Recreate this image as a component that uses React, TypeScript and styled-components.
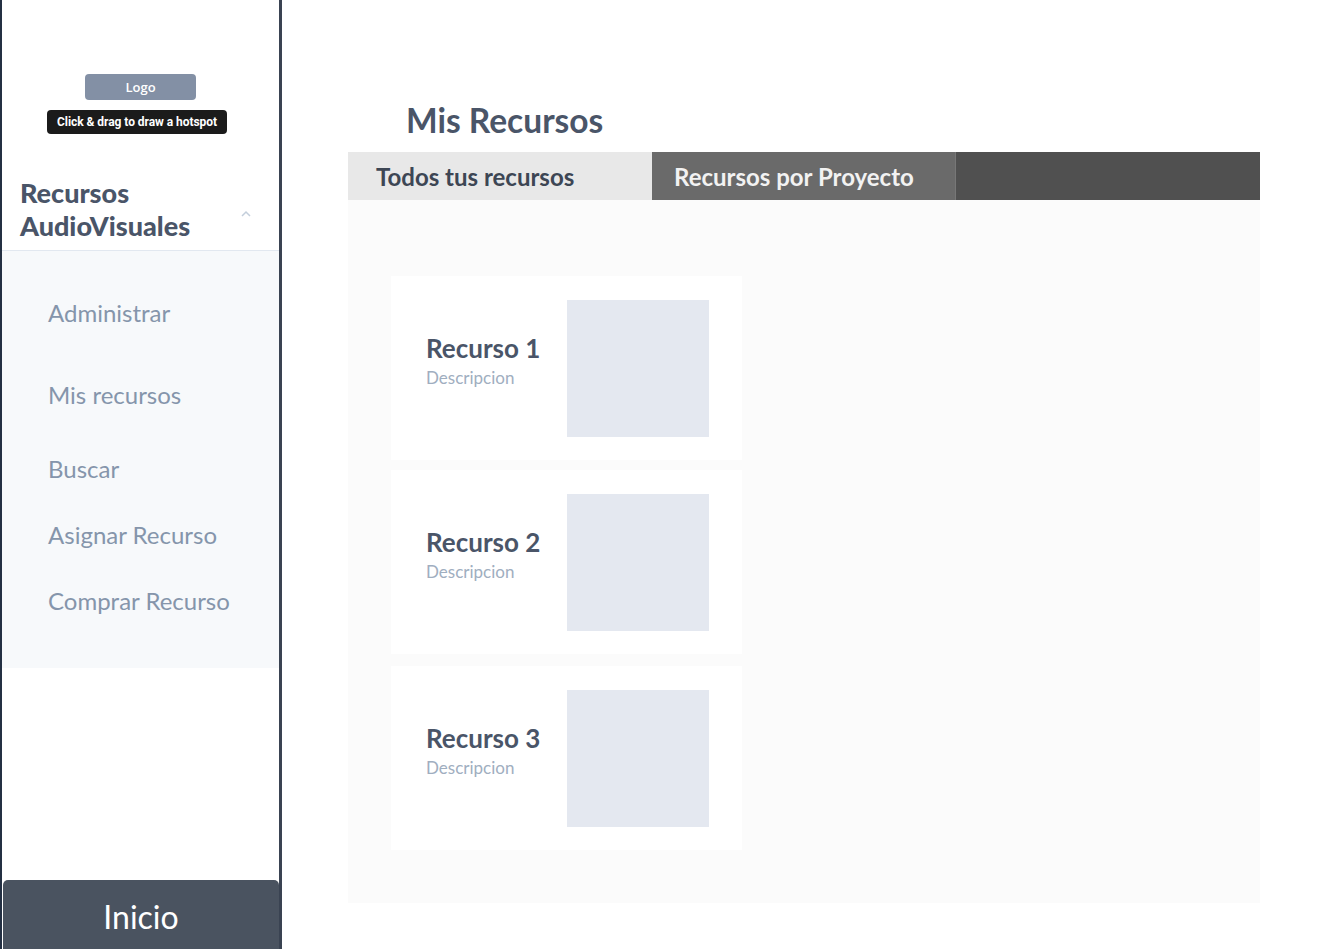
import React from "react";
import styled, { createGlobalStyle } from "styled-components";

const Global = createGlobalStyle`
  html, body { margin: 0; padding: 0; background: #ffffff; }
  body { font-family: "Lato", "Noto Sans", sans-serif; }
  * { box-sizing: border-box; }
`;

const Page = styled.div`
  display: flex;
  width: 1340px;
  height: 949px;
  overflow: hidden;
  background: #ffffff;
`;

const Sidebar = styled.aside`
  width: 282px;
  height: 949px;
  flex-shrink: 0;
  display: flex;
  flex-direction: column;
  border-left: 2px solid #243043;
  border-right: 3px solid #3a4352;
  background: #ffffff;
`;

const LogoArea = styled.div`
  display: flex;
  flex-direction: column;
  align-items: center;
  padding-top: 74px;
`;

const LogoButton = styled.div`
  width: 111px;
  height: 26px;
  border-radius: 4px;
  background: #8390a5;
  color: #ffffff;
  font-family: "Open Sans", "Noto Sans", sans-serif;
  font-weight: 600;
  font-size: 13px;
  display: flex;
  align-items: center;
  justify-content: center;
`;

const Tooltip = styled.div`
  margin-top: 10px;
  margin-right: 7px;
  width: 180px;
  height: 24px;
  border-radius: 4px;
  background: #1b1b1b;
  color: #ffffff;
  font-family: "Roboto", "Liberation Sans", sans-serif;
  font-weight: 700;
  font-size: 12px;
  letter-spacing: -0.05px;
  display: flex;
  align-items: center;
  justify-content: center;
`;

const SectionHeader = styled.div`
  margin-top: 42px;
  display: flex;
  align-items: flex-end;
  justify-content: space-between;
  padding: 0 27px 8px 18px;
  border-bottom: 1px solid #e2e8f0;
`;

const SectionTitle = styled.h2`
  margin: 0;
  font-family: "Lato", sans-serif;
  font-weight: 900;
  font-size: 27px;
  line-height: 33px;
  color: #4a5568;
`;

const Chevron = styled.svg`
  margin-bottom: 24px;
`;

const Menu = styled.nav`
  display: flex;
  flex-direction: column;
  background: #f7f9fb;
  padding: 29px 0 34px 46px;
`;

const MenuItem = styled.a<{ $gap: number }>`
  display: block;
  margin-top: ${(p) => p.$gap}px;
  height: 66px;
  line-height: 66px;
  font-family: "Lato", sans-serif;
  font-size: 24px;
  font-weight: 400;
  color: #8595ab;
  text-decoration: none;
`;

const HomeButton = styled.button`
  margin-top: auto;
  margin-left: 1px;
  height: 69px;
  border: none;
  border-radius: 5px 5px 0 0;
  background: #4a5360;
  color: #ffffff;
  font-family: "Lato", sans-serif;
  font-weight: 400;
  font-size: 32px;
  display: flex;
  align-items: center;
  justify-content: center;
  padding: 4px 0 0 0;
`;

const Main = styled.main`
  flex: 1;
  padding: 100px 0 0 66px;
`;

const Heading = styled.h1`
  margin: 0 0 12px 58px;
  height: 40px;
  line-height: 40px;
  font-family: "Lato", sans-serif;
  font-weight: 700;
  font-size: 33.5px;
  color: #4a5568;
`;

const TabBar = styled.div`
  width: 912px;
  height: 48px;
  display: flex;
  background: #505050;
`;

const Tab = styled.div<{ $active?: boolean; $pad: number }>`
  width: 304px;
  height: 48px;
  display: flex;
  align-items: center;
  padding-left: ${(p) => p.$pad}px;
  background: ${(p) => (p.$active ? "#e8e8e8" : "#6a6a6a")};
  color: ${(p) => (p.$active ? "#3d4654" : "#f2f2f2")};
  font-family: "Lato", sans-serif;
  font-weight: 700;
  font-size: 24px;
  border-right: ${(p) => (p.$active ? "none" : "1px solid #777777")};
`;

const Panel = styled.section`
  width: 912px;
  height: 703px;
  background: #fbfbfb;
  padding: 76px 0 0 43px;
  display: flex;
  flex-direction: column;
  gap: 10px;
`;

const Card = styled.div<{ $extra: number }>`
  width: 351px;
  height: 184px;
  margin-top: ${(p) => p.$extra}px;
  background: #ffffff;
  display: flex;
  align-items: center;
  justify-content: space-between;
  padding: 0 33px 0 35px;
`;

const CardText = styled.div`
  display: flex;
  flex-direction: column;
  margin-bottom: 16px;
`;

const CardTitle = styled.div`
  font-family: "Lato", sans-serif;
  font-weight: 700;
  font-size: 26px;
  line-height: 32px;
  color: #4a5568;
`;

const CardDesc = styled.div`
  font-family: "Lato", sans-serif;
  font-size: 17px;
  line-height: 22px;
  margin-top: 3px;
  color: #a0aec0;
`;

const Thumb = styled.div`
  width: 142px;
  height: 137px;
  background: #e4e8f0;
`;

const menu = [
  { label: "Administrar", gap: 0 },
  { label: "Mis recursos", gap: 16 },
  { label: "Buscar", gap: 8 },
  { label: "Asignar Recurso", gap: 0 },
  { label: "Comprar Recurso", gap: 0 },
];

export default function App() {
  return (
    <>
      <Global />
      <Page>
        <Sidebar>
          <LogoArea>
            <LogoButton>Logo</LogoButton>
            <Tooltip>Click &amp; drag to draw a hotspot</Tooltip>
          </LogoArea>
          <SectionHeader>
            <SectionTitle>
              Recursos
              <br />
              AudioVisuales
            </SectionTitle>
            <Chevron width="12" height="8" viewBox="0 0 12 8">
              <path d="M2 6 L6 2 L10 6" fill="none" stroke="#c3cedb" strokeWidth="1.5" />
            </Chevron>
          </SectionHeader>
          <Menu>
            {menu.map((m) => (
              <MenuItem key={m.label} $gap={m.gap} href="#">
                {m.label}
              </MenuItem>
            ))}
          </Menu>
          <HomeButton>Inicio</HomeButton>
        </Sidebar>
        <Main>
          <Heading>Mis Recursos</Heading>
          <TabBar>
            <Tab $active $pad={28}>Todos tus recursos</Tab>
            <Tab $pad={22}>Recursos por Proyecto</Tab>
          </TabBar>
          <Panel>
            {[1, 2, 3].map((n) => (
              <Card key={n} $extra={n === 3 ? 2 : 0}>
                <CardText>
                  <CardTitle>Recurso {n}</CardTitle>
                  <CardDesc>Descripcion</CardDesc>
                </CardText>
                <Thumb />
              </Card>
            ))}
          </Panel>
        </Main>
      </Page>
    </>
  );
}
